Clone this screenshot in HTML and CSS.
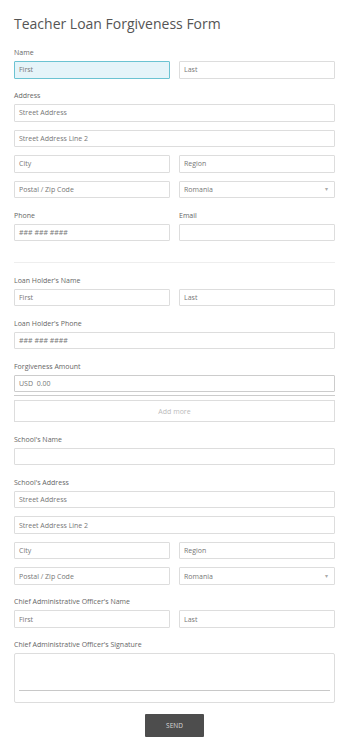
FILE: index.html
```html
<!DOCTYPE html>
<html lang="en">
<head>
    <meta charset="UTF-8">
    <meta name="viewport" content="width=device-width, initial-scale=1.0">
    <title>Teacher Loan Forgiveness Form</title>
    <link rel="stylesheet" href="styles.css">
</head>
<body>
    <form class="loan-form">
        <h1 class="form-title">Teacher Loan Forgiveness Form</h1>

        <div class="field">
            <label class="field-label">Name</label>
            <div class="row">
                <div class="input focused">First</div>
                <div class="input">Last</div>
            </div>
        </div>

        <div class="field">
            <label class="field-label">Address</label>
            <div class="stack">
                <div class="input">Street Address</div>
                <div class="input">Street Address Line 2</div>
                <div class="row">
                    <div class="input">City</div>
                    <div class="input">Region</div>
                </div>
                <div class="row">
                    <div class="input">Postal / Zip Code</div>
                    <div class="input select">Romania <span class="caret">&#9662;</span></div>
                </div>
            </div>
        </div>

        <div class="field row">
            <div>
                <label class="field-label">Phone</label>
                <div class="input">### ### ####</div>
            </div>
            <div>
                <label class="field-label">Email</label>
                <div class="input"></div>
            </div>
        </div>

        <div class="divider"></div>

        <div class="field">
            <label class="field-label">Loan Holder's Name</label>
            <div class="row">
                <div class="input">First</div>
                <div class="input">Last</div>
            </div>
        </div>

        <div class="field">
            <label class="field-label">Loan Holder's Phone</label>
            <div class="input">### ### ####</div>
        </div>

        <div class="field">
            <label class="field-label">Forgiveness Amount</label>
            <div class="input amount">USD&nbsp; 0.00</div>
            <div class="amount-line"></div>
            <div class="add-more">Add more</div>
        </div>

        <div class="field">
            <label class="field-label">School's Name</label>
            <div class="input"></div>
        </div>

        <div class="field">
            <label class="field-label">School's Address</label>
            <div class="stack">
                <div class="input">Street Address</div>
                <div class="input">Street Address Line 2</div>
                <div class="row">
                    <div class="input">City</div>
                    <div class="input">Region</div>
                </div>
                <div class="row">
                    <div class="input">Postal / Zip Code</div>
                    <div class="input select">Romania <span class="caret">&#9662;</span></div>
                </div>
            </div>
        </div>

        <div class="field">
            <label class="field-label">Chief Administrative Officer's Name</label>
            <div class="row">
                <div class="input">First</div>
                <div class="input">Last</div>
            </div>
        </div>

        <div class="field signature-field">
            <label class="field-label">Chief Administrative Officer's Signature</label>
            <div class="signature">
                <div class="signature-line"></div>
            </div>
        </div>

        <div class="actions">
            <button type="button" class="btn-send">SEND</button>
        </div>
    </form>
</body>
</html>
```

FILE: styles.css
```css
:root {
    --text: #555555;
    --label: #666666;
    --placeholder: #777777;
    --border: #dddddd;
    --focus-bg: #e5f4f9;
    --focus-border: #6cc3d2;
}

body {
    margin: 0;
    font-family: 'Open Sans', 'Liberation Sans', sans-serif;
    background: #ffffff;
    color: var(--text);
}

.loan-form {
    padding: 14px 15px 20px 14px;
}

.form-title {
    font-size: 14px;
    font-weight: 400;
    line-height: 20px;
    margin: 0 0 14px;
    color: #555555;
}

.field {
    margin-bottom: 12.5px;
}

.field-label {
    display: block;
    font-size: 7px;
    line-height: 10px;
    margin-bottom: 3px;
    color: var(--label);
}

.row {
    display: grid;
    grid-template-columns: 1fr 1fr;
    gap: 9px;
}

.stack {
    display: flex;
    flex-direction: column;
    gap: 8px;
}

.input {
    box-sizing: border-box;
    height: 17.5px;
    border: 1px solid var(--border);
    border-radius: 1px;
    padding: 0 4px;
    font-size: 7px;
    color: var(--placeholder);
    display: flex;
    align-items: center;
    background: #ffffff;
}

.input.focused {
    background: var(--focus-bg);
    border-color: var(--focus-border);
}

.select {
    justify-content: space-between;
}

.caret {
    font-size: 6px;
    color: #aaaaaa;
    margin-right: 2px;
}

/* margins collapse with the field above, so top is the full gap */
.divider {
    height: 1px;
    background: #eeeeee;
    margin: 21.3px 0 12.5px;
}

.input.amount {
    border-color: #cccccc;
}

.amount-line {
    height: 1px;
    background: #cccccc;
    margin: 2.5px 0 4px;
}

.add-more {
    box-sizing: border-box;
    height: 22.5px;
    border: 1px solid var(--border);
    display: flex;
    align-items: center;
    justify-content: center;
    font-size: 7px;
    color: #bbbbbb;
}

.signature {
    box-sizing: border-box;
    height: 50px;
    border: 1px solid var(--border);
    border-radius: 2px;
    padding: 35.5px 4px 0;
}

.signature-line {
    height: 1px;
    background: #c8c8c8;
}

.signature-field {
    margin-bottom: 10.7px;
}

.actions {
    display: flex;
    justify-content: center;
}

.btn-send {
    width: 59px;
    height: 23px;
    border: none;
    border-radius: 1px;
    background: #4d4d4d;
    color: #d8d8d8;
    font-family: 'Open Sans', 'Liberation Sans', sans-serif;
    font-size: 6.5px;
    padding: 0;
    cursor: pointer;
}
```
